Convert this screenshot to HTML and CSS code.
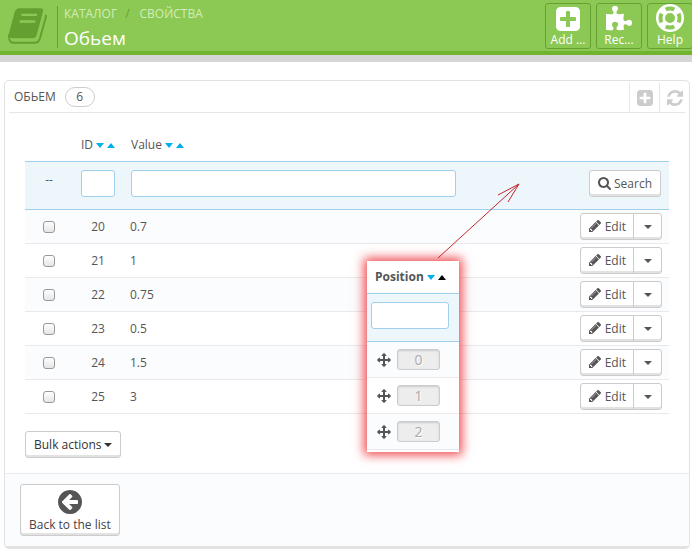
FILE: index.html
```
<!DOCTYPE html>
<html lang="ru">
<head>
    <meta charset="UTF-8">
    <meta name="viewport" content="width=device-width, initial-scale=1.0">
    <title>Обьем</title>
    <link rel="stylesheet" href="styles.css">
</head>
<body>
    <svg class="sprite" aria-hidden="true">
        <symbol id="plus" viewBox="128 128 1536 1536"><path d="M1408 960v-128q0-26-19-45t-45-19h-320v-320q0-26-19-45t-45-19h-128q-26 0-45 19t-19 45v320h-320q-26 0-45 19t-19 45v128q0 26 19 45t45 19h320v320q0 26 19 45t45 19h128q26 0 45-19t19-45v-320h320q26 0 45-19t19-45zm256-544v960q0 119-84.5 203.5t-203.5 84.5h-960q-119 0-203.5-84.5t-84.5-203.5v-960q0-119 84.5-203.5t203.5-84.5h960q119 0 203.5 84.5t84.5 203.5z"/></symbol>
        <symbol id="refresh" viewBox="128 128 1536 1536"><path d="M1639 1056q0 5-1 7-64 268-268 434.5t-478 166.5q-146 0-282.5-55t-243.5-157l-129 129q-19 19-45 19t-45-19-19-45v-448q0-26 19-45t45-19h448q26 0 45 19t19 45-19 45l-137 137q71 66 161 102t187 36q134 0 250-65t186-179q11-17 53-117 8-23 30-23h192q13 0 22.5 9.5t9.5 22.5zm25-800v448q0 26-19 45t-45 19h-448q-26 0-45-19t-19-45 19-45l138-138q-148-137-349-137-134 0-250 65t-186 179q-11 17-53 117-8 23-30 23h-199q-13 0-22.5-9.5t-9.5-22.5v-7q65-268 270-434.5t480-166.5q146 0 284 55.5t245 156.5l130-129q19-19 45-19t45 19 19 45z"/></symbol>
        <symbol id="search" viewBox="64 128 1664 1664"><path d="M1216 832q0-185-131.5-316.5t-316.5-131.5-316.5 131.5-131.5 316.5 131.5 316.5 316.5 131.5 316.5-131.5 131.5-316.5zm512 832q0 52-38 90t-90 38q-54 0-90-38l-343-342q-179 124-399 124-143 0-273.5-55.5t-225-150-150-225-55.5-273.5 55.5-273.5 150-225 225-150 273.5-55.5 273.5 55.5 225 150 150 225 55.5 273.5q0 220-124 399l343 343q37 37 37 90z"/></symbol>
        <symbol id="pencil" viewBox="128 149 1515 1515"><path d="M491 1536l91-91-235-235-91 91v107h128v128h107zm523-928q0-22-22-22-10 0-17 7l-542 542q-7 7-7 17 0 22 22 22 10 0 17-7l542-542q7-7 7-17zm-54-192l416 416-832 832h-416v-416zm683 96q0 53-37 90l-166 166-416-416 166-165q36-38 90-38 53 0 91 38l235 234q37 39 37 91z"/></symbol>
        <symbol id="move" viewBox="0 0 1792 1792"><path d="M1792 896q0 26-19 45l-256 256q-19 19-45 19t-45-19-19-45v-128h-384v384h128q26 0 45 19t19 45-19 45l-256 256q-19 19-45 19t-45-19l-256-256q-19-19-19-45t19-45 45-19h128v-384h-384v128q0 26-19 45t-45 19-45-19l-256-256q-19-19-19-45t19-45l256-256q19-19 45-19t45 19 19 45v128h384v-384h-128q-26 0-45-19t-19-45 19-45l256-256q19-19 45-19t45 19l256 256q19 19 19 45t-19 45-45 19h-128v384h384v-128q0-26 19-45t45-19 45 19l256 256q19 19 19 45z"/></symbol>
        <symbol id="back" viewBox="128 128 1536 1536"><path d="M1408 960v-128q0-26-19-45t-45-19h-502l189-189q19-19 19-45t-19-45l-91-91q-18-18-45-18t-45 18l-362 362-91 91q-18 18-18 45t18 45l91 91 362 362q18 18 45 18t45-18l91-91q18-18 18-45t-18-45l-189-189h502q26 0 45-19t19-45zm256-64q0 209-103 385.5t-279.5 279.5-385.5 103-385.5-103-279.5-279.5-103-385.5 103-385.5 279.5-279.5 385.5-103 385.5 103 279.5 279.5 103 385.5z"/></symbol>
        <symbol id="puzzle" viewBox="91 0 1664 1664"><path d="M1755 1083q0 81-44.5 135t-123.5 54q-41 0-77.5-17.5t-59-38-56.5-38-71-17.5q-110 0-110 124 0 39 16 115t15 115v5q-22 0-33 1-34 3-97.5 11.5t-115.5 13.5-98 5q-61 0-103-26.5t-42-83.5q0-37 17.5-71t38-56.5 38-59 17.5-77.5q0-79-54-123.5t-135-44.5q-84 0-143 45.5t-59 127.5q0 43 15 83t33.5 64.5 33.5 53 15 50.5q0 45-46 89-37 35-117 35-95 0-245-24-9-2-27.5-4t-27.5-4l-13-2q-1 0-3-1-2 0-2-1v-1024q2 1 17.5 3.5t34 5 21.5 3.5q150 24 245 24 80 0 117-35 46-44 46-89 0-22-15-50.5t-33.5-53-33.5-64.5-15-83q0-82 59-127.5t144-45.5q80 0 134 44.5t54 123.5q0 41-17.5 77.5t-38 59-38 56.5-17.5 71q0 57 42 83.5t103 26.5q64 0 180-15t163-17v2q-1 2-3.5 17.5t-5 34-3.5 21.5q-24 150-24 245 0 80 35 117 44 46 89 46 22 0 50.5-15t53-33.5 64.5-33.5 83-15q82 0 127.5 59t45.5 143z"/></symbol>
        <symbol id="ring" viewBox="0 0 28 28">
            <circle cx="14" cy="14" r="9.5" fill="none" stroke="currentColor" stroke-width="9"/>
            <circle cx="14" cy="14" r="9.5" fill="none" stroke="#8cc954" stroke-width="4" pathLength="80" stroke-dasharray="12 8" stroke-dashoffset="6"/>
        </symbol>
        <symbol id="book" viewBox="0 0 117 107">
            <path d="M34 0H97q11 0 8 10L86 81q-3 9-12 9H14Q4 90 1 82L20 12Q24 0 34 0z"/>
            <path d="M112 20q3 3 1 9L95 93q-4 11-14 11H16Q2 104 3 80" fill="none" stroke="currentColor" stroke-width="6"/>
            <path d="M40 20H87M35 40H82" stroke="#8cc954" stroke-width="7"/>
        </symbol>
    </svg>

    <header class="header">
        <svg class="book"><use href="#book"/></svg>
        <div class="title">
            <nav class="crumbs"><a href="#">КАТАЛОГ</a><span class="slash">/</span><a href="#">СВОЙСТВА</a></nav>
            <h1>Обьем</h1>
        </div>
        <div class="toolbar">
            <button class="tool"><svg class="icon-add"><use href="#plus"/></svg>Add ...</button>
            <button class="tool"><svg class="icon-puzzle"><use href="#puzzle"/></svg>Rec...</button>
            <button class="tool"><svg class="icon-ring"><use href="#ring"/></svg>Help</button>
        </div>
    </header>

    <main class="panel">
        <div class="panel-head">
            <h2>ОБЬЕМ</h2>
            <span class="badge">6</span>
            <div class="panel-actions">
                <button aria-label="Add"><svg><use href="#plus"/></svg></button>
                <button aria-label="Refresh"><svg><use href="#refresh"/></svg></button>
            </div>
        </div>

        <div class="content">
            <table class="list">
                <thead>
                    <tr class="titles">
                        <th class="col-check"></th>
                        <th class="col-id">ID <i class="down"></i><i class="up"></i></th>
                        <th class="col-value">Value <i class="down"></i><i class="up"></i></th>
                        <th></th>
                    </tr>
                    <tr class="filter">
                        <td class="col-check">--</td>
                        <td><input type="text" class="field" aria-label="ID"></td>
                        <td><input type="text" class="field" aria-label="Value"></td>
                        <td class="actions"><button class="btn search"><svg><use href="#search"/></svg>Search</button></td>
                    </tr>
                </thead>
                <tbody id="rows"></tbody>
            </table>
            <button class="btn bulk">Bulk actions <i class="down"></i></button>

            <div class="popup">
                <table class="position">
                    <thead>
                        <tr><th>Position <i class="down"></i><i class="up active"></i></th></tr>
                        <tr class="filter"><td><input type="text" class="field" aria-label="Position"></td></tr>
                    </thead>
                    <tbody>
                        <tr><td><div class="drag"><svg><use href="#move"/></svg><span>0</span></div></td></tr>
                        <tr><td><div class="drag"><svg><use href="#move"/></svg><span>1</span></div></td></tr>
                        <tr><td><div class="drag"><svg><use href="#move"/></svg><span>2</span></div></td></tr>
                    </tbody>
                </table>
            </div>
            <svg class="pointer" viewBox="0 0 84 76"><path d="M1 75L82 1M61 12L82 1L71 19"/></svg>
        </div>

        <div class="panel-foot">
            <button class="btn back"><svg><use href="#back"/></svg>Back to the list</button>
        </div>
    </main>

    <script>
        const values = [[20, '0.7'], [21, '1'], [22, '0.75'], [23, '0.5'], [24, '1.5'], [25, '3']];

        document.getElementById('rows').innerHTML = values.map(([id, value]) => `
            <tr>
                <td class="col-check"><input type="checkbox" aria-label="${id}"></td>
                <td class="id">${id}</td>
                <td class="value">${value}</td>
                <td class="actions">
                    <div class="group">
                        <button class="btn edit"><svg><use href="#pencil"/></svg>Edit</button>
                        <button class="btn more" aria-label="More"><i class="down"></i></button>
                    </div>
                </td>
            </tr>
        `).join('');
    </script>
</body>
</html>
```
FILE: styles.css
```
* { box-sizing: border-box; }
body { margin: 0; background: #fff; color: #555; font: 12px/18px "Open Sans", "Noto Sans", sans-serif; overflow-x: hidden; }
button, input { font: inherit; color: inherit; margin: 0; }
button { cursor: pointer; }
svg { fill: currentColor; flex: none; }
h1, h2 { margin: 0; font-weight: 400; }
a { color: inherit; text-decoration: none; }
.sprite { display: none; }

.header { display: flex; height: 62px; padding-left: 8px; background: #8cc954; border-bottom: 7px solid #d6d6d6; box-shadow: inset 0 -4px #72b332; overflow: hidden; }
.book { width: 39px; height: 36px; margin-top: 8px; color: #649f32; }
.title { flex: 1; height: 42px; margin: 6px 0 0 10px; padding-left: 6px; border-left: 1px solid #649f32; }
.crumbs { line-height: 16px; color: #d2ecb9; }
.slash { margin: 0 10px 0 8px; color: #649f32; }
h1 { font-size: 19px; line-height: 32px; color: #fff; }
.toolbar { display: flex; gap: 5px; margin: 3px -1px 0 0; }
.tool { display: flex; flex-direction: column; align-items: center; justify-content: flex-end; width: 46px; height: 46px; padding: 0; background: none; border: 1px solid #66a032; border-radius: 3px; color: #fff; line-height: 16px; white-space: nowrap; }
.tool svg { width: 26px; height: 26px; }
.tool .icon-add { width: 24px; height: 24px; margin-bottom: 1px; }
.tool .icon-ring { width: 28px; height: 28px; }

.panel { margin: 18px 2px 0 4px; border: 1px solid #e2e2e2; border-bottom-width: 3px; border-radius: 5px; }
.panel-head { display: flex; align-items: center; height: 32px; margin: 0 4px; padding-left: 5px; border-bottom: 1px solid #e6e6e6; }
h2 { font-size: 12px; }
.badge { width: 30px; margin-left: 9px; border: 1px solid #ccc; border-radius: 10px; text-align: center; }
.panel-actions { display: flex; align-self: stretch; margin: 2px -4px 0 auto; }
.panel-actions button { width: 30px; padding: 0 0 0 1px; background: none; border: 0; border-left: 1px solid #e6e6e6; color: #ccc; }
.panel-actions svg { display: block; width: 16px; height: 16px; margin: auto; }

.content { position: relative; padding: 16px 20px 15px; }
table { width: 100%; border-collapse: separate; border-spacing: 0; table-layout: fixed; }
th, td { padding: 0 8px; text-align: left; font-weight: 400; }
.list { margin-bottom: 17px; }
.list .titles th { height: 33px; border-bottom: 1px solid #a0d0eb; white-space: nowrap; }
.list .col-check { width: 48px; padding: 0; text-align: center; }
.list .col-id { width: 50px; }
.list .col-value { width: 53%; }
.list tbody td { height: 34px; border-bottom: 1px solid #e7e9ec; }
.list tbody tr:nth-child(odd), .position tbody tr:nth-child(odd) { background: #fbfcfe; }
.list .id { padding: 0; text-align: center; }
.list .value { padding-left: 7px; }
.list .actions { text-align: right; }
.list tbody .actions { padding: 0 7px; }
.filter td { height: 48px; padding-bottom: 4px; background: #ecf6fb; border-bottom: 1px solid #a0d0eb; }
.list .filter .col-check { padding-bottom: 12px; }

i { display: inline-block; border: 4px solid transparent; vertical-align: middle; }
.down { border-top: 5px solid #00aff0; border-bottom: 0; }
.up { border-bottom: 5px solid #00aff0; border-top: 0; margin-left: 3px; }
.up.active { border-bottom-color: #000; }
.btn .down { border-top: 4px solid currentColor; }

.field { display: block; width: 100%; height: 27px; padding: 0 6px; background: #fff; border: 1px solid #a0d0eb; border-radius: 3px; }
input[type="checkbox"] { appearance: none; display: block; width: 12px; height: 12px; margin: 0 auto; background: linear-gradient(#fff, #e6e6e6); border: 1px solid #999; border-radius: 3px; }
.btn { height: 27px; padding: 0 8px; background: #fff; border: 1px solid #ccc; border-radius: 3px; box-shadow: inset 0 -2px #e2e2e2; white-space: nowrap; }
.btn svg { width: 12px; height: 12px; margin-right: 4px; vertical-align: -1px; }
.search svg { width: 13px; height: 13px; margin-right: 3px; vertical-align: -2px; }
.group { display: inline-flex; vertical-align: middle; }
.edit { padding-right: 7px; border-radius: 3px 0 0 3px; }
.more { width: 29px; margin-left: -1px; padding: 0; border-radius: 0 3px 3px 0; }
.more .down { display: block; width: 8px; margin: 0 auto; }
.bulk { display: block; color: #333; }
.bulk .down { margin-left: -1px; }

/* column preview that floats over the list */
.popup { position: absolute; top: 148px; left: 362px; width: 92px; padding-bottom: 2px; background: #fff; box-shadow: 0 0 10px 3px #ef4a50; }
.position th { height: 33px; border-bottom: 1px solid #a0d0eb; font-weight: 700; white-space: nowrap; }
.position .filter td { padding: 0 10px 4px 4px; }
.position tbody td { height: 36px; border-bottom: 1px solid #e7e9ec; }
.drag { display: flex; align-items: center; gap: 6px; margin-left: 2px; }
.drag svg { width: 14px; height: 14px; }
.drag span { width: 43px; background: #ededed; border: 1px solid #ccc; border-radius: 3px; box-shadow: inset 0 1px 2px #ccc; color: #aaa; text-align: center; font-size: 14px; line-height: 19px; text-shadow: 1px 1px #fff; }
.pointer { position: absolute; top: 70px; left: 432px; width: 84px; height: 76px; fill: none; stroke: #c0272d; }

.panel-foot { padding: 10px 15px; background: #fbfcfe; border-top: 1px solid #e7e9ec; }
.back { display: flex; flex-direction: column; align-items: center; justify-content: space-between; height: 52px; padding: 5px 8px 1px; color: #444; }
.back svg { width: 24px; height: 24px; margin: 0; color: #555; }
```
